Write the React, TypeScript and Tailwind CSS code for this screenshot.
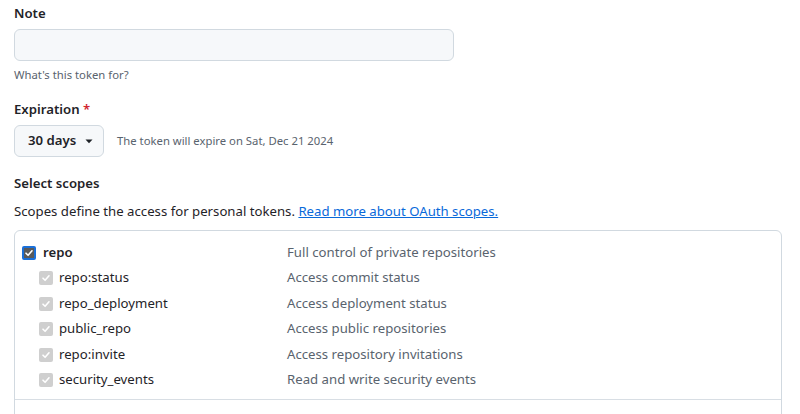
import React from "react";

const font = { fontFamily: '"Segoe UI", "Noto Sans", "Liberation Sans", sans-serif' };

const subScopes = [
  { name: "repo:status", desc: "Access commit status" },
  { name: "repo_deployment", desc: "Access deployment status" },
  { name: "public_repo", desc: "Access public repositories" },
  { name: "repo:invite", desc: "Access repository invitations" },
  { name: "security_events", desc: "Read and write security events" },
];

const Check = ({ className }: { className: string }) => (
  <span className={"flex items-center justify-center w-[14px] h-[14px] rounded-[2px] " + className}>
    <svg width="10" height="10" viewBox="0 0 10 10" fill="none">
      <path d="M2 5.2 L4.1 7.3 L8 2.8" stroke="white" strokeWidth="1.6" strokeLinecap="round" strokeLinejoin="round" />
    </svg>
  </span>
);

const App = () => {
  return (
    <div className="w-[800px] h-[414px] overflow-hidden bg-white px-[14px] text-[#1f2328] text-[13.2px]" style={font}>
      <div className="mt-[3px] font-semibold leading-[21px]">Note</div>
      <input
        className="mt-[5px] w-[440px] h-[32px] px-3 bg-[#f6f8fa] border border-[#d1d9e0] rounded-md"
        type="text"
      />
      <div className="mt-[5px] text-[11.3px] leading-[18px] text-[#59636e]">What's this token for?</div>

      <div className="mt-[15px] font-semibold leading-[21px]">
        Expiration <span className="text-[#d1242f]">*</span>
      </div>
      <div className="mt-[5px] flex items-center">
        <button className="flex items-center gap-[9px] h-[32px] w-[90px] pl-[13px] font-semibold bg-[#f6f8fa] border border-[#d1d9e0] rounded-md">
          30 days
          <svg width="8" height="5" viewBox="0 0 8 5">
            <path d="M0.5 0.5 L7.5 0.5 L4 4.2 Z" fill="#1f2328" />
          </svg>
        </button>
        <span className="ml-[13px] text-[11.3px] text-[#59636e]">The token will expire on Sat, Dec 21 2024</span>
      </div>

      <div className="mt-[16px] font-semibold leading-[21px]">Select scopes</div>
      <div className="mt-[7px] leading-[21px]">
        Scopes define the access for personal tokens.{" "}
        <a className="text-[#0969da] underline" href="#">
          Read more about OAuth scopes.
        </a>
      </div>

      <div className="mt-[8px] w-[768px] border border-[#d1d9e0] rounded-t-md h-[200px]">
        <div className="pt-[9px] pb-[6px] border-b border-[#d8dee4]">
          <div className="flex items-center h-[25.5px] pl-[7px]">
            <Check className="bg-[#5a5a5a] border-2 border-[#1a6fd8]" />
            <span className="ml-[7px] w-[244px] font-semibold">repo</span>
            <span className="text-[#59636e]">Full control of private repositories</span>
          </div>
          {subScopes.map((s) => (
            <div key={s.name} className="flex items-center h-[25.5px] pl-[24px]">
              <Check className="bg-[#cfcfcf]" />
              <span className="ml-[6px] w-[228px]">{s.name}</span>
              <span className="text-[#59636e]">{s.desc}</span>
            </div>
          ))}
        </div>
      </div>
    </div>
  );
};

export default App;
